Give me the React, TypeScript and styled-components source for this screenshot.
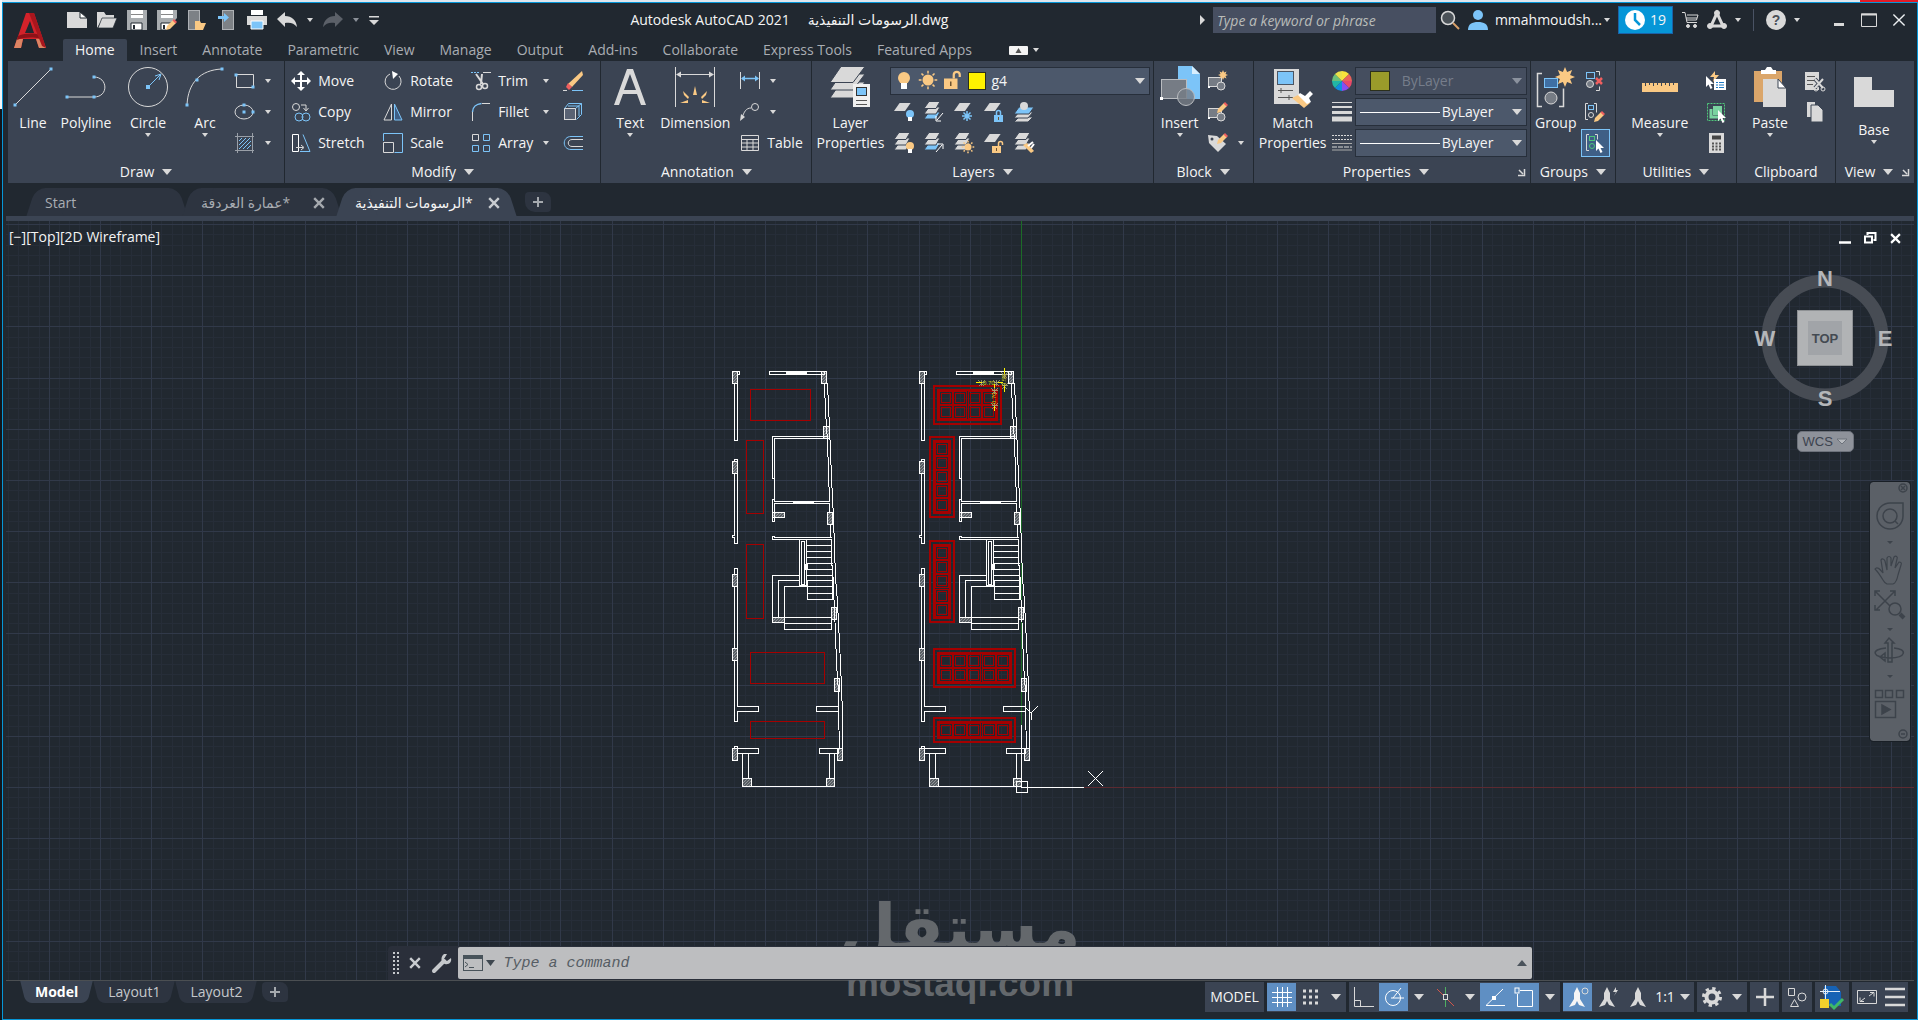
import React from "react";
import styled, { createGlobalStyle } from "styled-components";

const C = {
  bg: "#212830",
  panel: "#3b4453",
  field: "#4c586b",
  edge: "#272f3b",
  blue: "#0696d7",
  sky: "#7cc4f8",
  grey: "#d9d9d9",
  amber: "#fac984",
  text: "#f5f5f5",
  dim: "#a9adb3",
  red: "#a50000",
};

const Global = createGlobalStyle`
  * { box-sizing: border-box; }
  html, body, #root { height: 100%; }
  body {
    margin: 0;
    background: #dfe6ee;
    color: ${C.text};
    font: 14px/20px "Open Sans", "Noto Sans", "DejaVu Sans", sans-serif;
    overflow: hidden;
  }
  button, input, select { font: inherit; color: inherit; border: 0; background: none; padding: 0; margin: 0; }
  svg { display: block; flex: none; overflow: visible; }
`;

/* ---------- window frame ---------- */
const Page = styled.div`
  height: 100%;
  padding: 2px 0 0 2px;
  background: linear-gradient(to right, transparent 97%, #e11b26 97%) top / 100% 2px no-repeat,
    linear-gradient(#f4f6f8 109px, #11151b 109px) left / 2px 100% no-repeat, #dfe6ee;
`;
const Window = styled.div`
  position: relative;
  height: 100%;
  display: flex;
  flex-direction: column;
  background: ${C.bg};
  border: 1px solid ${C.blue};
`;

/* ---------- header ---------- */
const Header = styled.header`
  display: flex;
  height: 58px;
  flex: none;
`;
const AppButton = styled.button`
  width: 60px;
  display: flex;
  justify-content: center;
  padding: 10px 6px 0 0;
`;
const HeaderMain = styled.div`
  flex: 1;
  min-width: 0;
  display: flex;
  flex-direction: column;
`;
const TitleRow = styled.div`
  height: 36px;
  display: flex;
  align-items: center;
  padding-bottom: 2px;
`;
const QuickAccess = styled.div`
  display: flex;
  align-items: center;
  gap: 10px;
  padding-left: 4px;
`;
const IconButton = styled.button<{ $w?: number }>`
  width: ${(p) => p.$w ?? 20}px;
  height: 28px;
  display: flex;
  align-items: center;
  justify-content: center;
`;
const Title = styled.h1`
  flex: 1;
  margin: 0;
  display: flex;
  justify-content: center;
  gap: 18px;
  font-size: 14px;
  font-weight: 400;
  white-space: nowrap;
`;
const InfoCenter = styled.div`
  display: flex;
  align-items: center;
  gap: 8px;
`;
const SearchBox = styled.div`
  display: flex;
  align-items: center;
  gap: 4px;
`;
const Search = styled.input`
  width: 223px;
  height: 26px;
  background: #474f61;
  padding: 0 4px;
  font-style: italic;
  &::placeholder { color: #b9bcb9; opacity: 1; }
`;
const UserButton = styled.button`
  display: flex;
  align-items: center;
  gap: 2px;
`;
const UserName = styled.span`
  padding-left: 5px;
`;
const Trial = styled.button`
  height: 28px;
  width: 55px;
  display: flex;
  align-items: center;
  justify-content: center;
  gap: 5px;
  background: ${C.blue};
  border: 1px solid #1b62a8;
`;
const Split = styled.span`
  width: 1px;
  height: 22px;
  background: #4a5364;
  margin: 0 4px;
`;
const WindowButtons = styled.div`
  display: flex;
  gap: 10px;
  padding: 0 8px 0 29px;
`;

const RibbonTabs = styled.nav`
  display: flex;
  gap: 1px;
  height: 22px;
`;
const RibbonTab = styled.button<{ $on?: boolean }>`
  padding: 0 12px;
  height: 22px;
  line-height: 22px;
  border-radius: 2px 2px 0 0;
  white-space: nowrap;
  color: ${(p) => (p.$on ? C.text : C.dim)};
  background: ${(p) => (p.$on ? C.panel : "transparent")};
`;
const RibbonToggle = styled.button`
  margin-left: 24px;
  display: flex;
  align-items: center;
  gap: 5px;
`;

/* ---------- ribbon ---------- */
const RibbonBar = styled.div`
  display: flex;
  flex: none;
  gap: 1px;
  padding: 0 3px 0 5px;
`;
const PanelBox = styled.section<{ $grow: number }>`
  flex: ${(p) => p.$grow} 1 0;
  min-width: 0;
  height: 122px;
  background: ${C.panel};
  display: flex;
  flex-direction: column;
`;
const PanelBody = styled.div<{ $left?: number; $gap?: number }>`
  flex: 1;
  display: flex;
  align-items: flex-start;
  padding: 4px 3px 0 ${(p) => p.$left ?? 2}px;
  gap: ${(p) => p.$gap ?? 0}px;
`;
const PanelTitle = styled.h2`
  margin: 0;
  height: 22px;
  display: flex;
  align-items: center;
  font-size: 14px;
  font-weight: 400;
`;
const PanelMenu = styled.button`
  flex: 1;
  display: flex;
  align-items: center;
  justify-content: center;
  gap: 8px;
`;
const Launcher = styled.button`
  width: 12px;
  height: 12px;
`;
const BigTool = styled.button<{ $w: number }>`
  width: ${(p) => p.$w}px;
  flex: none;
  display: flex;
  flex-direction: column;
  align-items: center;
  line-height: 20px;
`;
const BigIcon = styled.span<{ $h?: number }>`
  height: ${(p) => p.$h ?? 44}px;
  margin-bottom: 4px;
  display: flex;
  align-items: center;
`;
const Rows = styled.div<{ $cols?: string }>`
  display: grid;
  grid-template-columns: ${(p) => p.$cols ?? "auto"};
  grid-auto-rows: 31px;
  align-items: center;
`;
const RowTool = styled.button<{ $gap?: number }>`
  display: flex;
  align-items: center;
  gap: ${(p) => p.$gap ?? 7}px;
  white-space: nowrap;
`;
const Push = styled.span`
  margin-left: auto;
  margin-right: 14px;
`;
const Cell = styled.button<{ $on?: boolean }>`
  width: 29px;
  height: 28px;
  display: flex;
  align-items: center;
  justify-content: center;
  ${(p) => p.$on && `background: #3f5f86; outline: 1px solid ${C.sky}; outline-offset: -1px;`}
`;
const LayerArea = styled.div`
  flex: 1;
  min-width: 0;
  margin-left: 4px;
`;
const Combo = styled.div<{ $off?: boolean }>`
  height: 28px;
  margin: 2px 0 1px;
  display: flex;
  align-items: center;
  gap: 5px;
  padding: 0 4px;
  border: 1px solid ${C.edge};
  background: ${(p) => (p.$off ? "#454e5f" : C.field)};
  color: ${(p) => (p.$off ? "#8b929e" : C.text)};
`;
const Select = styled.select`
  appearance: none;
  flex: 1;
  min-width: 0;
  height: 24px;
  outline: none;
`;
const LayerTools = styled.div`
  display: grid;
  grid-template-columns: repeat(5, 30px);
  grid-auto-rows: 31px;
  align-items: center;
  padding-left: 4px;
`;
const PropRow = styled.div`
  display: flex;
  align-items: center;
  gap: 3px;
  height: 31px;
`;
const PropArea = styled.div`
  flex: 1;
  min-width: 0;
  margin-left: 2px;
`;
const PropCombo = styled(Combo)`
  flex: 1;
  min-width: 0;
  gap: 2px;
`;
const Swatch = styled.span<{ $c: string; $s: number; $m?: number }>`
  width: ${(p) => p.$s}px;
  height: ${(p) => p.$s}px;
  flex: none;
  margin: 0 ${(p) => p.$m ?? 0}px;
  background: ${(p) => p.$c};
  border: 1px solid #2b2f1c;
`;
const LineSample = styled.span`
  width: 80px;
  height: 1px;
  flex: none;
  background: #fff;
`;

/* ---------- document tabs ---------- */
const DocTabs = styled.nav`
  display: flex;
  flex: none;
  height: 33px;
  padding: 5px 0 0 24px;
`;
const DocTab = styled.div<{ $on?: boolean; $w: number }>`
  position: relative;
  isolation: isolate;
  width: ${(p) => p.$w}px;
  height: 28px;
  margin-right: -6px;
  display: flex;
  align-items: center;
  justify-content: space-between;
  padding: 2px 14px 0 18px;
  color: ${(p) => (p.$on ? C.text : C.dim)};
  &::before, &::after {
    content: "";
    position: absolute;
    z-index: -1;
    inset: 0 6px 0 4px;
    background: ${(p) => (p.$on ? C.panel : "#2d3440")};
  }
  &::before { border-radius: 10px 6px 0 0; transform: skewX(-18deg); right: 40%; }
  &::after { border-radius: 6px 10px 0 0; transform: skewX(18deg); left: 20%; }
`;
const TabLink = styled.button`
  white-space: nowrap;
`;
const NewTab = styled.button<{ $m: number }>`
  width: 26px;
  height: 20px;
  align-self: center;
  display: flex;
  align-items: center;
  justify-content: center;
  background: #2d3440;
  border-radius: 4px 8px 4px 10px;
  margin-left: ${(p) => p.$m}px;
`;
const Strip = styled.div`
  height: 5px;
  flex: none;
  margin: 0 3px;
  background: ${C.panel};
`;

/* ---------- drawing area ---------- */
const Canvas = styled.main`
  position: relative;
  flex: 1;
  min-height: 0;
  margin: 0 3px;
  border-bottom: 1px solid #4b4f52;
`;
const Sheet = styled.svg`
  position: absolute;
  inset: 0;
  width: 100%;
  height: 100%;
  overflow: hidden;
`;
const ViewLabel = styled.div`
  position: relative;
  padding: 6px 3px;
`;
const ViewButtons = styled.div`
  position: absolute;
  top: 3px;
  right: 9px;
  display: flex;
  gap: 5px;
`;
const Cube = styled.div`
  position: absolute;
  top: 46px;
  right: 18px;
  display: flex;
  flex-direction: column;
  align-items: center;
  gap: 20px;
`;
const Wcs = styled.button`
  width: 57px;
  height: 21px;
  display: flex;
  align-items: center;
  justify-content: space-between;
  padding: 0 5px;
  border-radius: 5px;
  background: #8e929a;
  border: 1px solid #6d727b;
  color: #3c434f;
  font: 13px/18px "Liberation Sans", Arial, sans-serif;
`;
const NavBar = styled.div`
  position: absolute;
  top: 261px;
  right: 4px;
  width: 40px;
  height: 259px;
  border-radius: 3px;
  background: #5b6067;
  outline: 1px solid #191f26;
`;
const Watermark = styled.div`
  position: absolute;
  left: 0;
  right: 0;
  bottom: 16px;
  display: flex;
  flex-direction: column;
  align-items: center;
  color: #64686c;
  pointer-events: none;
`;
const MarkArabic = styled.span`
  font: 700 66px/72px "DejaVu Sans", sans-serif;
`;
const MarkLatin = styled.span`
  font: 700 37px/38px "Liberation Sans", Arial, sans-serif;
`;
const CommandBar = styled.div`
  position: absolute;
  z-index: 1;
  left: 20%;
  right: 20%;
  bottom: 0;
  height: 34px;
  display: flex;
  align-items: center;
  background: #2a2f3a;
  border-radius: 4px 4px 0 0;
`;
const CommandTools = styled.div`
  width: 70px;
  display: flex;
  align-items: center;
  justify-content: space-between;
  padding: 0 6px 0 5px;
`;
const CommandField = styled.label`
  flex: 1;
  height: 32px;
  display: flex;
  align-items: center;
  gap: 3px;
  padding: 0 5px;
  background: #bdbec0;
  border-radius: 2px;
`;
const CommandInput = styled.input`
  flex: 1;
  padding: 2px 0 0 6px;
  outline: none;
  color: #4b535b;
  font: italic 15px/20px "Liberation Mono", "DejaVu Sans Mono", monospace;
  &::placeholder { color: #565d64; opacity: 1; }
`;

/* ---------- status bar ---------- */
const Footer = styled.footer`
  position: relative;
  height: 38px;
  flex: none;
  display: flex;
  justify-content: space-between;
  padding: 0 9px 0 17px;
`;
const LayoutTabs = styled.div`
  display: flex;
  height: 22px;
`;
const LayoutTab = styled.button<{ $on?: boolean }>`
  height: 22px;
  padding: 0 15px;
  position: relative;
  isolation: isolate;
  font-weight: ${(p) => (p.$on ? 700 : 400)};
  color: ${(p) => (p.$on ? "#fff" : "#c5c8cc")};
  &::before, &::after {
    content: "";
    position: absolute;
    z-index: -1;
    inset: 0 3px;
    background: ${(p) => (p.$on ? C.panel : "#2d3440")};
    border-radius: 0 0 6px 6px;
  }
  &::before { transform: skewX(14deg); right: 30%; }
  &::after { transform: skewX(-14deg); left: 30%; }
`;
const StatusTools = styled.div`
  display: flex;
  gap: 3px;
  padding-top: 1px;
`;
const StatusGroup = styled.div`
  height: 30px;
  display: flex;
  align-items: center;
  background: ${C.panel};
`;
const StatusButton = styled.button<{ $w: number; $on?: boolean }>`
  width: ${(p) => p.$w}px;
  height: 28px;
  display: flex;
  align-items: center;
  justify-content: center;
  white-space: nowrap;
  background: ${(p) => (p.$on ? "#5f8fc3" : "transparent")};
`;

/* ---------- icons ---------- */
const Arrow = ({ s = 6, c = C.grey }: { s?: number; c?: string }) => (
  <svg width={s} height={Math.ceil(s / 2) + 1} viewBox="0 0 10 6" preserveAspectRatio="none">
    <path d="M0 0h10L5 6z" fill={c} />
  </svg>
);
const Ic = ({ w = 20, h = 20, children }: { w?: number; h?: number; children: React.ReactNode }) => (
  <svg width={w} height={h} viewBox={`0 0 ${w} ${h}`} fill="none" stroke={C.grey} aria-hidden>
    {children}
  </svg>
);
const Dot = ({ x, y, s = 3 }: { x: number; y: number; s?: number }) => (
  <rect x={x - s / 2} y={y - s / 2} width={s} height={s} fill={C.sky} stroke="none" />
);
const Slab = ({ x, y, w = 12, h = 8, c = C.grey }: { x: number; y: number; w?: number; h?: number; c?: string }) => (
  <path d={`M${x + h * 0.7} ${y}h${w}l${-h * 0.7} ${h}h${-w}z`} fill={c} stroke="none" />
);
const Slabs = ({ low = C.grey }: { low?: string }) => (
  <g stroke={C.panel}>
    <path d="M5 10h11l-4 7H0z" fill={low} />
    <path d="M5 5h11l-4 7H0z" fill={C.grey} />
    <path d="M5 -.5h11l-4 7H0z" fill={C.grey} />
  </g>
);
const Bulb = ({ x, y, c }: { x: number; y: number; c: string }) => (
  <g stroke="none">
    <circle cx={x} cy={y} r="4" fill={c} />
    <rect x={x - 2} y={y + 3} width="4" height="4" fill="#fff" />
  </g>
);
const Sun = ({ x, y, r = 4 }: { x: number; y: number; r?: number }) => (
  <g stroke={C.amber}>
    <circle cx={x} cy={y} r={r} fill={C.amber} stroke="none" />
    {[0, 45, 90, 135, 180, 225, 270, 315].map((a) => (
      <path key={a} d={`M${x + r + 1} ${y}h${r / 2}`} strokeWidth="1.5" transform={`rotate(${a} ${x} ${y})`} />
    ))}
  </g>
);
const Lock = ({ x, y, c, open, s = 1 }: { x: number; y: number; c: string; open?: boolean; s?: number }) => (
  <g transform={`translate(${x} ${y}) scale(${s})`}>
    <rect x="0" y="5" width="9" height="7" fill={c} stroke="none" />
    <path d={open ? "M6.500 5V2.500a2 2 0 0 1 4 0V4" : "M2.500 5V2.500a2 2 0 0 1 4 0V5"} stroke={c} strokeWidth="1.500" />
    <path d="M4.500 7v3" stroke="#6d5330" />
  </g>
);
const Pencil = ({ x, y }: { x: number; y: number }) => (
  <g transform={`translate(${x} ${y})`} stroke="none">
    <path d="M7 1l3 3-6 6-4 1 1-4z" fill={C.amber} />
    <path d="M8 0l3 3-1.500 1.500-3-3z" fill="#ef5f5f" />
  </g>
);
const Cursor = ({ x, y, s = 1 }: { x: number; y: number; s?: number }) => (
  <path transform={`translate(${x} ${y}) scale(${s})`} d="M0 0v11l2.500-2.500L4.500 13l2-1-2-4H8z" fill="#fff" stroke="none" />
);
const Star = ({ x, y, r }: { x: number; y: number; r: number }) => {
  const pts = Array.from({ length: 16 }, (_, i) => {
    const a = (i * Math.PI) / 8;
    const q = i % 2 ? r * 0.55 : r;
    return `${(x + q * Math.sin(a)).toFixed(1)},${(y - q * Math.cos(a)).toFixed(1)}`;
  }).join(" ");
  return <polygon points={pts} fill={C.amber} stroke="none" />;
};
const Close = ({ s = 10, c = "#c9ccd0", w = 2 }: { s?: number; c?: string; w?: number }) => (
  <svg width={s} height={s} viewBox="0 0 10 10" stroke={c} strokeWidth={w}>
    <path d="M1 1l8 8M9 1L1 9" />
  </svg>
);
const Plus = () => (
  <svg width="10" height="10" stroke="#a5a9ae" strokeWidth="2">
    <path d="M5 0v10M0 5h10" />
  </svg>
);
const BlockShape = () => (
  <>
    <rect x=".5" y="6.500" width="13" height="9" fill="#767c85" />
    <circle cx="13" cy="15" r="4" fill="#767c85" />
    <rect x="0" y="15" width="2" height="2" fill="#fff" stroke="none" />
  </>
);

const Logo = () => (
  <svg width="32" height="36" viewBox="0 0 32 36">
    <path d="M12 0h8l12 35h-7l-3-9H9l-2 9H0z" fill="#d3222a" />
    <path d="M16 8l4 12h-9z" fill={C.bg} />
    <path d="M0 35l3-9 6 0-2 9zM22 26l5-1 5 10h-7z" fill="#dc8463" />
    <path d="M4 23c8-3 16-3 21-1l1 4c-6-2-15-2-23 1z" fill="#8d1218" />
    <path d="M20 0l12 35-4-2L15 0z" fill="#a8161d" />
  </svg>
);

const NewIcon = () => <Ic><path d="M0 2h13l7 6v10H0z" fill={C.grey} stroke="none" /><path d="M13 2v6h7z" fill="#fff" stroke={C.bg} /></Ic>;
const OpenIcon = () => <Ic><path d="M0 18V2h7l2 3h8v3H6z" fill={C.grey} stroke="none" /><path d="M5 8h15l-4 10H1z" fill={C.grey} stroke={C.bg} strokeWidth=".7" /></Ic>;
const SaveIcon = ({ pen }: { pen?: boolean }) => (
  <Ic>
    <path d="M0 0h20v20H0z" fill="#a9adb0" stroke="none" />
    <path d="M4 0h12v8H4z" fill="#fff" stroke="none" />
    <path d="M4 4.500h12" stroke="#888" />
    <path d="M4 13h11v7H4z" fill="#fff" stroke={C.bg} />
    <path d="M7 15v4" stroke={C.bg} strokeWidth="2" />
    {pen && <><path d="M9 20l11-12v12z" fill={C.bg} stroke="none" /><Pencil x={9} y={9} /></>}
  </Ic>
);
const PhoneIcon = ({ out }: { out?: boolean }) => (
  <Ic>
    <rect x={out ? 5.5 : 1.5} y=".5" width="11" height="19" fill="#7d8186" stroke="#aeb1b5" />
    {out ? <path d="M1 6h6V3l5 4.500L7 12V9H1z" fill={C.sky} stroke="none" /> : <path d="M8 11h5l1 2h5l-3 7H8z" fill={C.amber} stroke="none" />}
  </Ic>
);
const PrintIcon = () => <Ic><path d="M4 0h12v5H4z" fill="#fff" stroke="none" /><path d="M0 6h20v9H0z" fill={C.grey} stroke="none" /><path d="M4 11h12v8H4z" fill={C.sky} stroke="#fff" /></Ic>;
const UndoIcon = ({ redo }: { redo?: boolean }) => (
  <Ic><path transform={redo ? "translate(20 0) scale(-1 1)" : undefined} d="M0 9l8-7v4c7 0 11 4 12 11-3-4-7-5-12-4v4z" fill={redo ? "#5b6068" : C.grey} stroke="none" /></Ic>
);

/* ---------- reusable pieces ---------- */
const Panel = ({ name, grow, left, gap, menu = true, launcher, children }: {
  name: string; grow: number; left?: number; gap?: number; menu?: boolean; launcher?: boolean; children: React.ReactNode;
}) => (
  <PanelBox $grow={grow}>
    <PanelBody $left={left} $gap={gap}>{children}</PanelBody>
    <PanelTitle>
      <PanelMenu>{name}{menu && <Arrow s={10} />}</PanelMenu>
      {launcher && (
        <Launcher aria-label={`${name} settings`}>
          <svg width="7" height="7" stroke={C.grey} fill="none"><path d="M1 1l4 4M6.500 0v6.500H0" strokeWidth="1.500" /></svg>
        </Launcher>
      )}
    </PanelTitle>
  </PanelBox>
);
const Big = ({ label, w, h, arrow, children }: { label: string[]; w: number; h?: number; arrow?: boolean; children: React.ReactNode }) => (
  <BigTool $w={w}>
    <BigIcon $h={h}>{children}</BigIcon>
    {label.map((l) => <span key={l}>{l}</span>)}
    {arrow && <Arrow />}
  </BigTool>
);

/* ---------- drawing ---------- */
const STEP = 51.17;
const ORIGIN_X = 1021;
const ORIGIN_Y = 787;
const majors = (origin: number, from: number, to: number) => {
  const out: number[] = [];
  for (let k = Math.ceil((from - origin) / STEP); origin + k * STEP < to; k++) out.push(k);
  return out;
};
const Grid = () => {
  const major: string[] = [];
  const minor: string[] = [];
  majors(ORIGIN_X, -60, 4000).forEach((k) => {
    for (let i = 0; i < 5; i++) (i ? minor : major).push(`M${Math.round(ORIGIN_X + (k + i / 5) * STEP) + 0.5} 0V3000`);
  });
  majors(ORIGIN_Y, 100, 2600).forEach((k) => {
    for (let i = 0; i < 5; i++) (i ? minor : major).push(`M0 ${Math.round(ORIGIN_Y + (k + i / 5) * STEP) + 0.5}H4000`);
  });
  return (
    <g fill="none">
      <path d={minor.join("")} stroke="#262d38" />
      <path d={major.join("")} stroke="#313949" />
    </g>
  );
};

const columns: [number, number, number, number][] = [
  [732, 371, 5, 12], [821, 371, 5, 12], [823, 426, 6, 12], [772, 512, 12, 5], [827, 512, 5, 12],
  [732, 461, 5, 12], [732, 574, 5, 12], [732, 648, 5, 12], [732, 748, 5, 12], [831, 607, 5, 12],
  [834, 678, 5, 13], [837, 748, 5, 12], [742, 778, 9, 8], [826, 778, 8, 8], [772, 617, 12, 5],
];
const walls = [
  "M737 371h2v3h-2", "M734 383h3v57h-3z", "M769 371h55v3h-55z",
  "M734 459h3v2h-3z", "M734 473h3v70h-3v-6h-2v-2h2z", "M734 568h3v6h-3z",
  "M734 586h3v62h-3z", "M737 706h21v5h-21v10h-3v-61h3z",
  "M838 706h-22v5h22z", "M734 746h3v2h-3z", "M737 748h21v5h-21zM838 748h-19v5h19z",
  "M742 753v25M748 753v25M829 753v25M834 753v25M742 786h92",
  "M827 436h-55v42h2v-40h53M774 478v23M829 501h-55M829 503h-55v18h-2v-22h2M829 503v9M830 524v13",
  "M831 537h-57v-1h-2v3h59v26", "M799 539v46h7v-46M801 541h3v43h-3z",
  "M806 545h25M806 551h25M806 557h25M806 563h26M806 569h26M806 575h26M806 580h27M806 586h27M807 593h26M807 599h26M807 580v19M832 569v30",
  "M799 575h-27v42M799 580h-21v37M806 586h-22v43h47v-12h-47M784 623h47",
];
const Plan = () => (
  <g stroke="#fff" fill="none" transform="translate(.5 .5)">
    {columns.map(([x, y, w, h]) => <rect key={`${x}-${y}`} x={x} y={y} width={w} height={h} fill="url(#hatch)" />)}
    <path d={walls.join("")} />
    <path d="M827 383l1 22 1 22 2 50 2 40 2 60 2 25 3 61 2 50v35M824 383l1 28 2 30 2 60M832 565l3 68 1 30 2 28 0 20 1 37" />
    <path d="M785 372.500h21M792 502h21M806 563v6" strokeWidth="3" />
  </g>
);

const Tiles = ({ x, y, w, h, cols, rows }: { x: number; y: number; w: number; h: number; cols: number; rows: number }) => {
  const cw = (w - 12) / cols;
  const ch = (h - 12) / rows;
  const cells = Array.from({ length: cols * rows }, (_, i) => [x + 6 + (i % cols) * cw, y + 6 + Math.floor(i / cols) * ch]);
  return (
    <g stroke={C.red} fill="none" shapeRendering="crispEdges">
      <rect x={x + 1} y={y + 1} width={w - 2} height={h - 2} strokeWidth="2" />
      <rect x={x + 5} y={y + 5} width={w - 10} height={h - 10} strokeWidth="2" />
      {cells.map(([cx, cy], i) => {
        const px = Math.round(cx) + 0.5;
        const py = Math.round(cy) + 0.5;
        const a = Math.round(cw) - 1;
        const b = Math.round(ch) - 1;
        return (
          <path
            key={i}
            d={`M${px} ${py}h${a}v${b}h${-a}zM${px + 2} ${py + 2}h${a - 4}v${b - 4}h${4 - a}z`}
          />
        );
      })}
    </g>
  );
};
const Cross = ({ x, y }: { x: number; y: number }) => (
  <path d={`M${x - 3} ${y - 3}l6 6m0 -6l-6 6M${x - 3} ${y}h6M${x} ${y - 3}v6`} stroke="#a9a678" strokeWidth=".8" />
);

const Drawing = () => (
  <Sheet role="img" aria-label="Floor plans">
    <defs>
      <pattern id="hatch" width="3" height="3" patternUnits="userSpaceOnUse">
        <rect width="1" height="1" fill="#fff" />
        <rect x="1" y="2" width="1" height="1" fill="#fff" />
        <rect x="2" y="1" width="1" height="1" fill="#fff" />
      </pattern>
    </defs>
    <g transform="translate(-6 -221)" shapeRendering="crispEdges">
      <Grid />
      <path d="M1021.500 200V725" stroke="#1c6b27" />
      <path d="M1084 787.500H4000" stroke="#5c2a31" />
      <Plan />
      <g transform="translate(187 0)"><Plan /></g>
      <g stroke={C.red} fill="none">
        <path d="M750.500 389.500h60v31h-60zM746.500 440.500h17v73h-17zM746.500 544.500h17v74h-17zM750.500 652.500h74v31h-74zM750.500 721.500h74v17h-74z" />
      </g>
      <Tiles x={933} y={385} w={69} h={40} cols={4} rows={2} />
      <Tiles x={929} y={436} w={26} h={82} cols={1} rows={5} />
      <Tiles x={929} y={540} w={26} h={83} cols={1} rows={5} />
      <Tiles x={933} y={648} w={83} h={40} cols={5} rows={2} />
      <Tiles x={933} y={717} w={83} h={26} cols={5} rows={1} />
      <g fill="none">
        <Cross x={981.5} y={382.5} /><Cross x={996.5} y={382.5} /><Cross x={1004.5} y={374.5} />
        <Cross x={1004.5} y={385.5} /><Cross x={994.5} y={390.5} /><Cross x={994.500} y={405.5} />
        <path d="M976 382.500h6M998 382.500h5M1004.500 368v6M1004.500 386v6M994.500 384v4M994.500 406v5" stroke="#fff200" />
      </g>
      <g fill="#d6cf1a" fontSize="6" fontFamily="Liberation Sans, sans-serif">
        <text x="983" y="385">0.70</text>
        <text transform="translate(1006 386) rotate(-90)">0.50</text>
        <text transform="translate(996 404) rotate(-90)">0.70</text>
      </g>
      <path d="M1021.500 725V787.500H1084M1016.500 781.500h11v11h-11zM1088 771l15 15M1103 771l-15 15M1024 706l7 7v7M1031 713l7-7" stroke="#fff" fill="none" />
    </g>
  </Sheet>
);

const ViewCube = () => (
  <Cube>
    <svg width="142" height="144" viewBox="0 0 142 144" fontFamily="Liberation Sans, Arial, sans-serif" fontWeight="700" textAnchor="middle">
      <circle cx="71" cy="71" r="57" fill="none" stroke="#474c54" strokeWidth="13" />
      <rect x="43.500" y="43.500" width="55" height="55" fill="#b1b3b5" stroke="#8e9194" />
      <rect x="54" y="54" width="34" height="34" fill="#a1a4a8" />
      <text x="71" y="76" fontSize="13" fill="#444a52">TOP</text>
      <g fontSize="22" fill="#b4b6b9">
        <text x="71" y="19">N</text>
        <text x="71" y="139">S</text>
        <text x="11" y="79">W</text>
        <text x="131" y="79">E</text>
      </g>
    </svg>
    <Wcs>WCS <svg width="12" height="8" fill="#b7babf" stroke="#6d727b"><path d="M1 1h10L6 6z" /></svg></Wcs>
  </Cube>
);

const Navigation = () => (
  <NavBar>
    <svg width="40" height="259" fill="none" stroke="#3d434b" strokeWidth="1.500">
      <circle cx="33" cy="6" r="4" /><path d="M31 4l4 4M35 4l-4 4" />
      <path d="M20 21h13v13a13 13 0 1 1-13-13z" /><circle cx="20" cy="34" r="7" /><path d="M25 39l3 3" />
      <path d="M13 98c-3-5-6-9-8-11 2-3 5 0 8 4l-2-13c1-2 3-1 4 1l2 9V76c1-2 3-2 4 0v8l3-9c2-2 4 0 3 2l-2 9 4-6c2 0 3 1 2 3l-3 10c-1 5-2 8-5 9h-6c-2-1-3-2-4-4z" strokeWidth="1.200" />
      <path d="M5 109l20 20M25 109L6 128M5 114v-5h5M20 109h5v5M5 123v5h5" />
      <circle cx="25" cy="127" r="6" fill="#5b6067" /><path d="M30 132l4 4" strokeWidth="4" />
      <path d="M18 180v-19h-3l4-5 5 5h-2v19z" /><path d="M16 166c-16 1-14 10 4 10 16 0 18-9 4-10M10 175l5-4v8z" />
      <path d="M5.500 208.500h7v7h-7zM15.500 208.500h7v7h-7zM26.500 208.500h7v7h-7zM5.500 219.500h20v16h-20z" /><path d="M12 223v9l8-4.500z" fill="#3d434b" />
      <circle cx="33" cy="252" r="4" /><path d="M31 252h4" />
      <path d="M17 59h6l-3 3zM17 146h6l-3 3zM17 193h6l-3 3z" fill="#3d434b" stroke="none" />
    </svg>
  </NavBar>
);

const tabs = ["Home", "Insert", "Annotate", "Parametric", "View", "Manage", "Output", "Add-ins", "Collaborate", "Express Tools", "Featured Apps"];

const wheel = ["#f7e23c", "#e8625a", "#e8486a", "#8a4cf0", "#0f8fe0", "#21b7a5", "#6cc07a", "#e9e04a"];

const RibbonPanels = () => (
  <RibbonBar>
    <Panel name="Draw" grow={276}>
      <Big label={["Line"]} w={46}><Ic w={40} h={40}><path d="M2 38L38 2" /><Dot x={2} y={38} /><Dot x={38} y={2} /></Ic></Big>
      <Big label={["Polyline"]} w={60}><Ic w={40} h={40}><path d="M1 30h27c15 0 14-20 0-20" /><Dot x={1} y={30} /><Dot x={28} y={30} /><Dot x={28} y={10} /></Ic></Big>
      <Big label={["Circle"]} w={64} arrow><Ic w={40} h={40}><circle cx="20" cy="20" r="19.500" /><path d="M20 20L32 8M27 9l6-2-2 6" stroke={C.sky} /><Dot x={20} y={20} s={4} /></Ic></Big>
      <Big label={["Arc"]} w={50} arrow><Ic w={40} h={40}><path d="M2 38C3 16 15 3 37 2" /><Dot x={2} y={38} /><Dot x={12} y={13} /><Dot x={37} y={2} /></Ic></Big>
      <Rows>
        <RowTool $gap={10} aria-label="Rectangle"><Ic w={25}><path d="M6.500 3.500h17v13h-17z" /><Dot x={6} y={4} /><Dot x={23} y={16} /></Ic><Arrow /></RowTool>
        <RowTool $gap={10} aria-label="Ellipse"><Ic w={25}><ellipse cx="14" cy="10" rx="9" ry="7" /><Dot x={14} y={3} /><Dot x={14} y={10} /><Dot x={23} y={10} /></Ic><Arrow /></RowTool>
        <RowTool $gap={10} aria-label="Hatch"><Ic w={25}><path d="M5 3.500h19M5 17.500h19M7.500 0v20M22.500 0v20" stroke="#9aa0a8" /><path d="M9 8l3-3M9 12l7-7M9 16L20 5M13 16l8-8M17 16l4-4" stroke={C.sky} /></Ic><Arrow /></RowTool>
      </Rows>
    </Panel>

    <Panel name="Modify" grow={315} left={6}>
      <Rows $cols="92px 88px 92px 24px">
        <RowTool><Ic><path d="M10 2v16M2 10h16" strokeWidth="2" stroke="#fff" /><path d="M10 0l4 4H6zM10 20l4-4H6zM0 10l4-4v8zM20 10l-4-4v8z" fill="#fff" stroke="none" /></Ic>Move</RowTool>
        <RowTool><Ic><path d="M7 3a8 8 0 1 0 9 2" /><path d="M9 0l6 3-5 5z" fill="#fff" stroke="none" /></Ic>Rotate</RowTool>
        <RowTool><Ic><path d="M0 1.500h8" strokeDasharray="2 1" stroke={C.sky} /><path d="M12 1.500h8" /><path d="M5 3l7 10M11 3l-1 10" strokeWidth="2" /><circle cx="8" cy="16" r="2.500" strokeWidth="1.500" /><circle cx="14" cy="15" r="2.500" strokeWidth="1.500" /></Ic>Trim<Push><Arrow /></Push></RowTool>
        <RowTool aria-label="Erase"><Ic><path d="M19 0l1 4L9 16l-4-3z" fill={C.amber} stroke="none" /><path d="M5 12l4 4-3 3-3-3z" fill="#ef5f5f" stroke="none" /><path d="M0 19.500h4" /><path d="M9 19.500h11" stroke={C.sky} /></Ic></RowTool>
        <RowTool><Ic><circle cx="5" cy="5" r="3.500" /><path d="M10 3h5v5M12.500 6L15 9l2.500-3" /><circle cx="8" cy="15" r="4" stroke={C.sky} /><circle cx="15" cy="15" r="4" stroke={C.sky} /></Ic>Copy</RowTool>
        <RowTool><Ic><path d="M8.500 2v16H1z" /><path d="M11.500 2v16H19z" stroke={C.sky} fill="#3f5f86" /></Ic>Mirror</RowTool>
        <RowTool><Ic><path d="M1.500 19v-9M11 1.500h8" /><path d="M1.500 10c0-5 4-8 9-8.500" stroke={C.sky} strokeWidth="1.500" /></Ic>Fillet<Push><Arrow /></Push></RowTool>
        <RowTool aria-label="Explode"><Ic><rect x="1.500" y="6.500" width="11" height="11" fill="#596273" /><path d="M1.500 6.500l4-5h13v11l-5 5M12.500 6.500l6-5M5 4h11v10" stroke={C.sky} /></Ic></RowTool>
        <RowTool><Ic><path d="M1.500 1.500h6v17h-6z" stroke="#fff" /><path d="M12 1.500l7 17H9" stroke={C.sky} /><path d="M5 14.500h7M10 12l3 2.500-3 2.500" /></Ic>Stretch</RowTool>
        <RowTool><Ic><path d="M.5 8V.5h19v19h-8" stroke={C.sky} /><path d="M.5 9.500h10v10H.5z" /></Ic>Scale</RowTool>
        <RowTool><Ic><path d="M1.500 1.500h6v6h-6z" /><path d="M12.500 1.500h6v6h-6zM1.500 12.500h6v6h-6zM12.500 12.500h6v6h-6z" stroke={C.sky} /></Ic>Array<Push><Arrow /></Push></RowTool>
        <RowTool aria-label="Offset"><Ic><path d="M20 3.500H8c-9 0-9 13 0 13h12" stroke={C.sky} /><path d="M20 6.500H9c-5 0-5 7 0 7h11" /></Ic></RowTool>
      </Rows>
    </Panel>

    <Panel name="Annotation" grow={210} left={0}>
      <Big label={["Text"]} w={58} arrow><Ic w={32} h={36}><path d="M13 0h6l13 36h-5l-4-11H9L5 36H0zM16 5l-6 16h12z" fill={C.grey} stroke="none" fillRule="evenodd" /></Ic></Big>
      <Big label={["Dimension"]} w={72}>
        <Ic w={40} h={40}>
          <path d="M.5 0v40M39.500 0v40M2 7.500h36" /><path d="M1 7.500l5-3v6zM39 7.500l-5-3v6z" fill={C.grey} stroke="none" />
          <g fill={C.amber} stroke="none"><path d="M18 28l2-9 2 9zM14 30l-6-6 1 4 4 4zM26 30l6-6-1 4-4 4zM5 36l8-3v3zM35 36l-8-3v3z" /></g>
        </Ic>
      </Big>
      <LayerArea>
        <Rows>
          <RowTool aria-label="Linear" $gap={10}><Ic w={25}><path d="M5.500 1v17M24.500 1v17" /><path d="M7 7.500h16" stroke={C.sky} strokeWidth="1.500" /><path d="M6 7.500l4-3v6zM24 7.500l-4-3v6z" fill={C.sky} stroke="none" /></Ic><Arrow /></RowTool>
          <RowTool aria-label="Leader" $gap={10}><Ic w={25}><circle cx="20" cy="5" r="3.500" /><path d="M16 6c-5 0-7 4-9 10" /><path d="M5 19l1-7 4 3z" fill={C.grey} stroke="none" /></Ic><Arrow /></RowTool>
          <RowTool $gap={7}><Ic w={25}><path d="M6.500 2.500h17v15h-17zM6 6.500h18M6 10h18M6 14h18M12 6v12M18 6v12" /></Ic>Table</RowTool>
        </Rows>
      </LayerArea>
    </Panel>

    <Panel name="Layers" grow={340}>
      <Big label={["Layer", "Properties"]} w={72}>
        <Ic w={40} h={40}>
          <g fill={C.grey} stroke={C.panel}><path d="M11 15h24L23 31H0z" /><path d="M11 7h24L23 23H0z" /><path d="M11 -.5h24L23 15.500H0z" /></g>
          <rect x="23" y="17" width="17" height="23" fill="#f0f0f0" stroke="none" /><rect x="26.500" y="20.500" width="10" height="8" fill={C.sky} stroke="#333" />
          <path d="M26 33.500h11M26 37.500h11" stroke="#555" />
        </Ic>
      </Big>
      <LayerArea>
        <Combo>
          <Ic w={18}><circle cx="9" cy="7" r="6" fill={C.amber} stroke="none" /><path d="M6 12h6v6H6z" fill="#fff" stroke="none" /></Ic>
          <Ic><Sun x={10} y={9} r={5.500} /></Ic>
          <Ic><Lock x={1} y={0} c={C.amber} open s={1.500} /></Ic>
          <Swatch $c="#fff200" $s={18} />
          <Select aria-label="Layer" defaultValue="g4"><option>g4</option></Select>
          <Arrow s={10} />
        </Combo>
        <LayerTools>
          <RowTool aria-label="Off"><Ic><Slab x={0} y={1} w={11} /><Bulb x={16} y={12} c={C.sky} /></Ic></RowTool>
          <RowTool aria-label="Isolate"><Ic><Slabs low={C.sky} /><path d="M19 11l-6 7M12 14v5h5" stroke="#fff" /></Ic></RowTool>
          <RowTool aria-label="Freeze"><Ic><Slab x={0} y={1} w={11} /><path d="M13 9v10M8 14h10M9.500 10.500l7 7M16.500 10.500l-7 7" stroke={C.sky} strokeWidth="1.500" /></Ic></RowTool>
          <RowTool aria-label="Lock"><Ic><Slab x={0} y={1} w={11} /><Lock x={10} y={8} c={C.sky} /></Ic></RowTool>
          <RowTool aria-label="Make current"><Ic><path d="M5 15h14l-5 5H0z" fill={C.grey} stroke={C.panel} /><path d="M5 10h14l-5 6H0z" fill={C.grey} stroke={C.panel} /><path d="M5 5h15l-5 7H0z" fill={C.sky} stroke={C.panel} /><circle cx="10" cy="4" r="4" fill={C.grey} stroke="none" /></Ic></RowTool>
          <RowTool aria-label="Turn all on"><Ic><Slabs /><Bulb x={16} y={13} c={C.amber} /></Ic></RowTool>
          <RowTool aria-label="Unisolate"><Ic><Slabs low={C.sky} /><path d="M12 19l6-7M13 11h6v5" stroke="#fff" /></Ic></RowTool>
          <RowTool aria-label="Thaw all"><Ic><Slabs /><Sun x={14} y={14} r={3.500} /></Ic></RowTool>
          <RowTool aria-label="Unlock"><Ic><Slab x={0} y={1} w={11} /><Lock x={8} y={8} c={C.amber} open /></Ic></RowTool>
          <RowTool aria-label="Match layer"><Ic><Slabs /><path d="M9 12l4-2 7 8-3 2z" fill={C.amber} stroke="none" /><path d="M14 13l5-4M17 15l3-4" stroke="#fff" strokeWidth="2" /></Ic></RowTool>
        </LayerTools>
      </LayerArea>
    </Panel>

    <Panel name="Block" grow={99}>
      <Big label={["Insert"]} w={48} arrow>
        <Ic w={40} h={42}>
          <path d="M18 0h14l8 8v25H18z" fill={C.sky} stroke="none" /><path d="M32 0v8h8z" fill="#d8eefd" stroke="none" />
          <rect x="1.500" y="13.500" width="25" height="19" fill="#767c85" stroke="#b9bcc0" /><circle cx="26" cy="31" r="8.500" fill="#767c85" fillOpacity=".8" stroke="#b9bcc0" />
          <rect x="0" y="31" width="3" height="3" fill="#fff" stroke="none" />
        </Ic>
      </Big>
      <LayerArea>
        <Rows>
          <RowTool $gap={10} aria-label="Create"><Ic><BlockShape /><Star x={15} y={4} r={5} /></Ic></RowTool>
          <RowTool $gap={10} aria-label="Edit"><Ic><BlockShape /><Pencil x={9} y={0} /></Ic></RowTool>
          <RowTool $gap={10} aria-label="Edit attributes"><Ic><path d="M0 2l9 1 9 8-8 8-9-9z" fill={C.grey} stroke="none" /><circle cx="4" cy="6" r="1.500" fill={C.panel} stroke="none" /><Pencil x={9} y={0} /></Ic><Arrow /></RowTool>
        </Rows>
      </LayerArea>
    </Panel>

    <Panel name="Properties" grow={276} launcher>
      <Big label={["Match", "Properties"]} w={74}>
        <Ic w={40} h={42}>
          <path d="M1 3h25v35H1z" fill={C.grey} stroke="none" /><rect x="4.500" y="5.500" width="16" height="13" fill={C.sky} stroke="#4b5563" />
          <path d="M5 24.500h15M5 31.500h15M8 22v5M16 29v5" stroke="#555" />
          <path d="M19 32l8-4 10 9-6 5z" fill={C.amber} stroke="none" /><path d="M27 27l5 3 5-5 3 3-4 4 2 4-4 2-9-9z" fill="#fff" stroke="none" />
        </Ic>
      </Big>
      <PropArea>
        <PropRow>
          <Ic>{wheel.map((c, i) => <path key={c} d="M10 10V0a10 10 0 0 1 7.100 2.900z" fill={c} stroke="none" transform={`rotate(${i * 45} 10 10)`} />)}</Ic>
          <PropCombo $off><Swatch $c="#9a9b2a" $s={20} $m={10} /><Select aria-label="Object color" disabled><option>ByLayer</option></Select><Arrow s={10} c="#8b929e" /></PropCombo>
        </PropRow>
        <PropRow>
          <Ic><path d="M0 .5h20" /><path d="M0 5h20" strokeWidth="2" /><path d="M0 10.500h20" strokeWidth="3" /><path d="M0 17h20" strokeWidth="5" /></Ic>
          <PropCombo><LineSample /><Select aria-label="Lineweight"><option>ByLayer</option></Select><Arrow s={10} /></PropCombo>
        </PropRow>
        <PropRow>
          <Ic><path d="M0 2.500h20M0 6.500h20" strokeDasharray="2 1" /><path d="M0 10.500h20M0 17h20" stroke="#aaa" /><path d="M0 14h20" strokeDasharray="5 1" /></Ic>
          <PropCombo><LineSample /><Select aria-label="Linetype"><option>ByLayer</option></Select><Arrow s={10} /></PropCombo>
        </PropRow>
      </PropArea>
    </Panel>

    <Panel name="Groups" grow={84} left={0}>
      <Big label={["Group"]} w={50}>
        <Ic w={40} h={40}>
          <path d="M6 6.500H1.500v33H6M23 39.500h4.500v-18" strokeWidth="1.500" /><rect x="8.500" y="11.500" width="13" height="9" fill="#3f6fa3" stroke={C.sky} />
          <circle cx="15" cy="31" r="6" fill="#767c85" /><Star x={29} y={10} r={10} />
        </Ic>
      </Big>
      <Rows>
        <Cell aria-label="Ungroup"><Ic><rect x="1.500" y="1.500" width="8" height="6" stroke={C.sky} /><circle cx="5" cy="13" r="3.500" fill="#767c85" /><path d="M11 .5h3.500v4M11 19.500h3.500v-4" /><path d="M11 7l6 6M17 7l-6 6" stroke="#ef5f5f" strokeWidth="2.500" /></Ic></Cell>
        <Cell aria-label="Group edit"><Ic><path d="M3 1.500H.5v16H3M9 1.500h2.500v9" /><rect x="3.500" y="3.500" width="5" height="4" stroke={C.sky} /><circle cx="6" cy="13" r="2.500" /><Pencil x={9} y={9} /></Ic></Cell>
        <Cell $on aria-label="Group selection"><Ic><path d="M4 1.500H1.500v16H4M10 1.500h2.500v5" /><rect x="4.500" y="3.500" width="5" height="4" stroke="#4fc77a" /><circle cx="7" cy="13" r="2.500" stroke="#4fc77a" /><Cursor x={11} y={7} /></Ic></Cell>
      </Rows>
    </Panel>

    <Panel name="Utilities" grow={120}>
      <Big label={["Measure"]} w={84} arrow>
        <Ic w={36} h={10}><path d="M0 1h36v9H0z" fill={C.amber} stroke="none" /><path d="M3.500 0v4M7.500 0v3M11.500 0v4M15.500 0v3M19.500 0v4M23.500 0v3M27.500 0v4M31.500 0v3" stroke={C.panel} /></Ic>
      </Big>
      <Rows>
        <Cell aria-label="Quick select"><Ic><path d="M9 0L4 6h4l-1 5 6-7H9z" fill={C.amber} stroke="none" /><rect x="8" y="8" width="12" height="11" fill="#fff" stroke="none" /><path d="M10 11.500h2M13 11.500h5M10 14h2M13 14h5M10 16.500h2M13 16.500h5" stroke="#1f7ac4" /><Cursor x={0} y={5} /></Ic></Cell>
        <Cell aria-label="Select all"><Ic><rect x="1.500" y="1.500" width="17" height="17" stroke="#4fc77a" strokeDasharray="2 1" /><path d="M7 4h9v9H7z" fill="#7ad3a0" stroke="none" /><path d="M5 7v8h8" stroke="#7ad3a0" strokeWidth="3" /><Cursor x={12} y={8} /></Ic></Cell>
        <Cell aria-label="Calculator"><Ic><rect x="3" y="0" width="15" height="20" fill={C.grey} stroke="none" /><path d="M6 4.500h9" stroke="#444" strokeWidth="4" /><path d="M6 10.500h9M6 13.500h9M6 16.500h9" stroke="#555" strokeWidth="2" strokeDasharray="2 1.500" /></Ic></Cell>
      </Rows>
    </Panel>

    <Panel name="Clipboard" grow={98} menu={false}>
      <Big label={["Paste"]} w={62} arrow>
        <Ic w={32} h={40}><path d="M0 4h28v31H0z" fill="#dba66a" stroke="none" /><path d="M7 3h4l2-3 4 0 2 3h3v4H7z" fill="#fff" stroke="none" /><path d="M9 12h15l8 9v19H9z" fill={C.grey} stroke="none" /><path d="M24 12v9h8z" fill="#fff" stroke={C.panel} /></Ic>
      </Big>
      <Rows>
        <Cell aria-label="Cut"><Ic><path d="M0 1h14v18H0z" fill={C.grey} stroke="none" /><path d="M2 5.500h8M2 9.500h8M2 13.500h6" stroke="#555" /><path d="M10 8l8 9M18 8l-8 9" stroke={C.panel} strokeWidth="4" /><path d="M10 8l8 9M18 8l-8 9" strokeWidth="2" /><circle cx="11" cy="18" r="2" /><circle cx="18" cy="18" r="2" /></Ic></Cell>
        <Cell aria-label="Copy clip"><Ic><path d="M2 0h8v15H2z" fill={C.grey} stroke="none" /><path d="M6 3h7l5 5v12H6z" fill={C.grey} stroke={C.panel} /></Ic></Cell>
      </Rows>
    </Panel>

    <Panel name="View" grow={78} left={0} launcher>
      <Big label={["Base"]} w={76} h={51} arrow><Ic w={40} h={32}><path d="M0 2h18v13h22v17H0z" fill={C.grey} stroke="none" /></Ic></Big>
    </Panel>
  </RibbonBar>
);

const Mark = () => <path d="M9 0l3 6v6l5 8-6-2-2-4-2 4-6 2 5-8V6z" fill="currentColor" stroke="none" />;

export default function App() {
  return (
    <Page>
      <Global />
      <Window>
        <Header>
          <AppButton aria-label="Application menu"><Logo /></AppButton>
          <HeaderMain>
            <TitleRow>
              <QuickAccess>
                <IconButton aria-label="New"><NewIcon /></IconButton>
                <IconButton aria-label="Open"><OpenIcon /></IconButton>
                <IconButton aria-label="Save"><SaveIcon /></IconButton>
                <IconButton aria-label="Save as"><SaveIcon pen /></IconButton>
                <IconButton aria-label="Open from mobile"><PhoneIcon /></IconButton>
                <IconButton aria-label="Save to mobile"><PhoneIcon out /></IconButton>
                <IconButton aria-label="Plot"><PrintIcon /></IconButton>
                <IconButton aria-label="Undo"><UndoIcon /></IconButton>
                <IconButton $w={6} aria-label="Undo list"><Arrow /></IconButton>
                <IconButton aria-label="Redo"><UndoIcon redo /></IconButton>
                <IconButton $w={6} aria-label="Redo list"><Arrow c="#8b9098" /></IconButton>
                <IconButton $w={10} aria-label="Customize"><svg width="10" height="9" fill={C.grey}><path d="M0 0h10v1.500H0zM0 4h10L5 9z" /></svg></IconButton>
              </QuickAccess>
              <Title><span>Autodesk AutoCAD 2021</span><span>الرسومات التنفيذية.dwg</span></Title>
              <InfoCenter>
                <svg width="5" height="10" fill={C.grey}><path d="M0 0l5 5-5 5z" /></svg>
                <SearchBox>
                  <Search aria-label="Search" placeholder="Type a keyword or phrase" />
                  <IconButton aria-label="Find"><Ic><circle cx="8" cy="8" r="6.500" strokeWidth="1.500" fill="#4b5258" /><path d="M13 13l6 6" stroke="#d9a06a" strokeWidth="2" /></Ic></IconButton>
                </SearchBox>
                <UserButton>
                  <Ic><circle cx="10" cy="5" r="5" fill={C.sky} stroke="none" /><path d="M0 20c0-6 4-8 10-8s10 2 10 8z" fill={C.sky} stroke="none" /></Ic>
                  <UserName>mmahmoudsh...</UserName><Arrow />
                </UserButton>
                <Trial>
                  <svg width="20" height="20"><circle cx="10" cy="10" r="10" fill="#fff" /><path d="M10 3v7l5 5" fill="none" stroke={C.blue} strokeWidth="2.500" /></svg>19
                </Trial>
                <IconButton aria-label="Store" $w={18}><Ic w={16} h={16}><path d="M0 .5h3l2 10h10M5 3h11l-1.500 5H5M4 6h11" /><circle cx="6" cy="14" r="1.500" fill={C.grey} /><circle cx="13" cy="14" r="1.500" fill={C.grey} /></Ic></IconButton>
                <IconButton aria-label="Autodesk App Store"><Ic><path d="M10 3L4 16h12z" strokeWidth="3" /><circle cx="10" cy="3" r="2.500" fill={C.grey} /><circle cx="3" cy="16" r="2.500" fill={C.grey} /><circle cx="17" cy="16" r="2.500" fill={C.grey} /></Ic></IconButton>
                <Arrow />
                <Split />
                <IconButton aria-label="Help">
                  <svg width="20" height="20"><circle cx="10" cy="10" r="10" fill={C.grey} /><text x="10" y="15" fontSize="14" fontWeight="700" fontFamily="Liberation Sans, sans-serif" textAnchor="middle" fill="#4a4f57">?</text></svg>
                </IconButton>
                <Arrow />
              </InfoCenter>
              <WindowButtons>
                <IconButton aria-label="Minimize"><Ic w={16} h={14}><path d="M3 11.500h10" strokeWidth="3" /></Ic></IconButton>
                <IconButton aria-label="Maximize"><Ic w={16} h={14}><path d="M.5 1h15v12.500H.5z" /><path d="M0 1.500h16" strokeWidth="2" /></Ic></IconButton>
                <IconButton aria-label="Close"><Close s={14} c="#eceff1" w={1} /></IconButton>
              </WindowButtons>
            </TitleRow>
            <RibbonTabs>
              {tabs.map((t, i) => <RibbonTab key={t} $on={i === 0}>{t}</RibbonTab>)}
              <RibbonToggle aria-label="Minimize ribbon">
                <svg width="19" height="9"><rect width="19" height="9" rx="1" fill="#f4f4f4" /><path d="M9.500 2l3 5h-6z" fill="#555" /></svg>
                <Arrow />
              </RibbonToggle>
            </RibbonTabs>
          </HeaderMain>
        </Header>

        <RibbonPanels />

        <DocTabs>
          <DocTab $w={162}><TabLink>Start</TabLink></DocTab>
          <DocTab $w={160}><TabLink>عمارة الغردقة*</TabLink><IconButton aria-label="Close drawing"><Close s={12} c="#a5a9ae" /></IconButton></DocTab>
          <DocTab $w={181} $on><TabLink>الرسومات التنفيذية*</TabLink><IconButton aria-label="Close drawing"><Close s={12} /></IconButton></DocTab>
          <NewTab $m={13} aria-label="New drawing"><Plus /></NewTab>
        </DocTabs>
        <Strip />

        <Canvas>
          <Drawing />
          <ViewLabel>[−][Top][2D Wireframe]</ViewLabel>
          <ViewButtons>
            <IconButton aria-label="Minimize view"><Ic w={12} h={12}><path d="M0 10.500h12" strokeWidth="2.500" stroke="#fff" /></Ic></IconButton>
            <IconButton aria-label="Restore view"><Ic w={12} h={12}><path d="M3.500 3V1h8v7h-2M1 4.500h7v6H1z" strokeWidth="2" stroke="#fff" /></Ic></IconButton>
            <IconButton aria-label="Close view"><Close s={11} c="#fff" w={2} /></IconButton>
          </ViewButtons>
          <ViewCube />
          <Navigation />
          <CommandBar>
            <CommandTools>
              <svg width="6" height="22" stroke="#c6c9cc" strokeWidth="2" strokeDasharray="2 2"><path d="M1 0v22M5 0v22" /></svg>
              <Close s={12} w={2} />
              <svg width="20" height="20" viewBox="0 0 20 20"><path d="M2 18L12 8" stroke="#c6c9cc" strokeWidth="4" strokeLinecap="round" /><path d="M12 1c-4 3-3 9 1 10s7-2 6-6l-4 3-3-2 3-5z" fill="#c6c9cc" /></svg>
            </CommandTools>
            <CommandField>
              <Ic w={20} h={16}><rect x=".5" y=".5" width="19" height="15" stroke="#48535a" /><path d="M0 2h20" stroke="#48535a" strokeWidth="4" /><path d="M2 7l3 2.500L2 12M6 12.500h5" stroke="#48535a" /></Ic>
              <Arrow s={9} c="#3e474f" />
              <CommandInput aria-label="Command" placeholder="Type a command" />
              <svg width="10" height="6" fill="#4a535b"><path d="M0 6h10L5 0z" /></svg>
            </CommandField>
          </CommandBar>
        </Canvas>

        <Footer>
          <LayoutTabs>
            <LayoutTab $on>Model</LayoutTab>
            <LayoutTab>Layout1</LayoutTab>
            <LayoutTab>Layout2</LayoutTab>
            <NewTab $m={4} aria-label="New layout"><Plus /></NewTab>
          </LayoutTabs>
          <StatusTools>
            <StatusGroup><StatusButton $w={59}>MODEL</StatusButton></StatusGroup>
            <StatusGroup>
              <StatusButton $w={29} $on aria-label="Grid"><Ic><path d="M5.500 0v20M10.500 0v20M15.500 0v20M0 5.500h20M0 10.500h20M0 15.500h20" stroke="#fff" /></Ic></StatusButton>
              <StatusButton $w={30} aria-label="Snap"><Ic w={16} h={16}><path d="M0 2h16M0 8h16M0 14h16" strokeWidth="3" strokeDasharray="3 3" /></Ic></StatusButton>
              <StatusButton $w={20} aria-label="Snap settings"><Arrow s={10} /></StatusButton>
            </StatusGroup>
            <StatusGroup>
              <StatusButton $w={30} aria-label="Ortho"><Ic><path d="M.5 0v19.500H20M.5 13.500h6v6" /></Ic></StatusButton>
              <StatusButton $w={29} $on aria-label="Polar"><Ic><circle cx="9" cy="11" r="7.500" stroke="#fff" /><path d="M9 11L17 1M7 11h13" stroke="#fff" /></Ic></StatusButton>
              <StatusButton $w={22} aria-label="Polar settings"><Arrow s={10} /></StatusButton>
              <StatusButton $w={29} aria-label="Isometric"><Ic><path d="M10.500 0v7M10.500 13v7" stroke="#4fae62" /><path d="M2 2l6 6M13 13l6 6" stroke="#d1564b" /><rect x="8.500" y="7.500" width="4" height="5" /></Ic></StatusButton>
              <StatusButton $w={21} aria-label="Isometric settings"><Arrow s={10} /></StatusButton>
              <StatusButton $w={29} $on aria-label="Tracking"><Ic><path d="M18 2L1 18.500h19" stroke="#fff" /><rect x="7" y="9" width="4" height="4" fill="#fff" stroke="none" /></Ic></StatusButton>
              <StatusButton $w={30} $on aria-label="Object snap"><Ic><path d="M6 3.500h12.500v16h-15V7" stroke="#fff" /><rect x="1" y="1" width="4" height="5" stroke="#fff" /></Ic></StatusButton>
              <StatusButton $w={21} aria-label="Object snap settings"><Arrow s={10} /></StatusButton>
            </StatusGroup>
            <StatusGroup>
              <StatusButton $w={29} $on aria-label="Annotation visibility"><Ic><Mark /><circle cx="17" cy="4" r="3" /></Ic></StatusButton>
              <StatusButton $w={32} aria-label="Auto scale"><Ic><g color={C.grey}><Mark /></g><path d="M18 0l-3 5h3l-2 4 4-6h-2z" fill={C.grey} stroke="none" /></Ic></StatusButton>
              <StatusButton $w={30} aria-label="Annotation"><Ic><g color={C.grey}><Mark /></g></Ic></StatusButton>
              <StatusButton $w={22}>1:1</StatusButton>
              <StatusButton $w={18} aria-label="Scale list"><Arrow s={10} /></StatusButton>
            </StatusGroup>
            <StatusGroup>
              <StatusButton $w={30} aria-label="Workspace"><Ic><circle cx="10" cy="10" r="5.500" strokeWidth="4" /><circle cx="10" cy="10" r="8.500" strokeWidth="3" strokeDasharray="3.300 3.370" /></Ic></StatusButton>
              <StatusButton $w={20} aria-label="Workspace list"><Arrow s={10} /></StatusButton>
            </StatusGroup>
            <StatusGroup><StatusButton $w={29} aria-label="Add"><Ic><path d="M10 1v18M1 10h18" strokeWidth="2.500" /></Ic></StatusButton></StatusGroup>
            <StatusGroup><StatusButton $w={30} aria-label="Isolate objects"><Ic><path d="M1.500 1.500h6v7h-6zM3.500 19.500h8l-4-7z" /><circle cx="15" cy="10" r="4" /></Ic></StatusButton></StatusGroup>
            <StatusGroup>
              <StatusButton $w={34} aria-label="Graphics"><Ic w={24} h={24}><path d="M4 1h12l5 6v14H4z" fill="#1662b5" stroke="none" /><path d="M0 14h9v9H0z" fill="#f2d02c" stroke="none" /><path d="M5.500 0v14M0 6.500h20" stroke="#e6eef6" /><circle cx="5.500" cy="6.500" r="2.500" stroke="#e6eef6" /><path d="M10 19l4 4 9-9" stroke="#3fb868" strokeWidth="3" /></Ic></StatusButton>
            </StatusGroup>
            <StatusGroup>
              <StatusButton $w={30} aria-label="Clean screen"><Ic><path d="M.5 3.500h19v13H.5z" /><path d="M12 9l4-3M13 5.500h4v4M8 11l-4 3M3 10.500v4h4" /></Ic></StatusButton>
              <StatusButton $w={26} aria-label="Customization"><Ic><path d="M0 2h20M0 10h20M0 18h20" strokeWidth="2.500" /></Ic></StatusButton>
            </StatusGroup>
          </StatusTools>
        </Footer>
        <Watermark><MarkArabic>مستقل</MarkArabic><MarkLatin>mostaql.com</MarkLatin></Watermark>
      </Window>
    </Page>
  );
}
